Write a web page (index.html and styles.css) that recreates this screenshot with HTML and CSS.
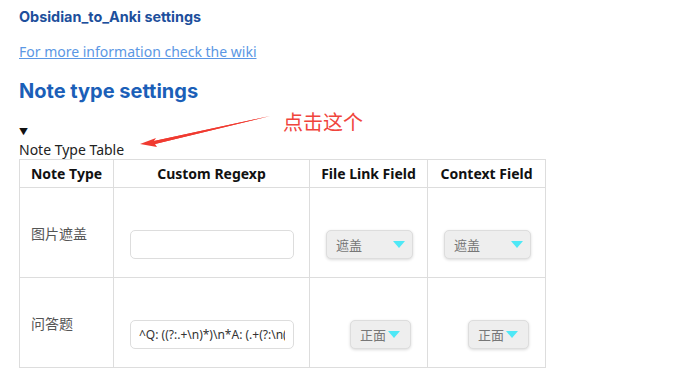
FILE: index.html
```html
<!DOCTYPE html>
<html lang="en">
<head>
    <meta charset="UTF-8">
    <meta name="viewport" content="width=device-width, initial-scale=1.0">
    <title>Obsidian_to_Anki settings</title>
    <link rel="stylesheet" href="styles.css">
</head>
<body>
    <h3 class="title">Obsidian_to_Anki settings</h3>
    <p class="wiki"><a href="#">For more information check the wiki</a></p>
    <h2 class="section">Note type settings</h2>

    <div class="toggle">&#9660;</div>
    <div class="caption">Note Type Table</div>

    <table class="types">
        <colgroup>
            <col class="c1">
            <col class="c2">
            <col class="c3">
            <col class="c4">
        </colgroup>
        <tr>
            <th>Note Type</th>
            <th>Custom Regexp</th>
            <th>File Link Field</th>
            <th>Context Field</th>
        </tr>
        <tr>
            <td class="name">图片遮盖</td>
            <td><div class="ctl"><input type="text" value=""></div></td>
            <td class="right"><div class="ctl"><span class="pick wide">遮盖<i></i></span></div></td>
            <td class="right"><div class="ctl"><span class="pick wide">遮盖<i></i></span></div></td>
        </tr>
        <tr>
            <td class="name">问答题</td>
            <td><div class="ctl"><input type="text" value="^Q: ((?:.+\n)*)\n*A: (.+(?:\n(?:^.{1,3}$|^.{4}(?<!<!--).*))*)"></div></td>
            <td class="right"><div class="ctl"><span class="pick">正面<i></i></span></div></td>
            <td class="right"><div class="ctl"><span class="pick">正面<i></i></span></div></td>
        </tr>
    </table>

    <!-- screenshot annotation -->
    <div class="note">
        <svg width="140" height="40" viewBox="0 0 140 40">
            <polygon points="130,3 14,28 16,25 0,31 17,34 15,31" fill="#f03a30"/>
            <polygon points="130,3 15,31 14,28" fill="#f03a30"/>
        </svg>
        <span>点击这个</span>
    </div>
</body>
</html>
```

FILE: styles.css
```css
body{
    margin: 0;
    padding: 0 19px;
    font-family: "Noto Sans", "Noto Sans CJK SC", sans-serif;
    color: #222;
    background: #fff;
    position: relative;
}

.title{
    margin: 0;
    padding-top: 7px;
    font-family: Inter, "Noto Sans CJK SC", sans-serif;
    font-size: 14.4px;
    line-height: 20px;
    font-weight: 700;
    color: #1d4f9c;
}

.wiki{
    margin: 14px 0 0;
    font-size: 14px;
    line-height: 22px;
}

.wiki a{
    color: #5b97e4;
}

.section{
    margin: 15px 0 0;
    font-family: Inter, "Noto Sans CJK SC", sans-serif;
    font-size: 20px;
    line-height: 26px;
    font-weight: 700;
    color: #1b5fb8;
}

.toggle{
    margin-top: 22px;
    font-size: 9px;
    line-height: 12px;
    color: #111;
}

.caption{
    font-size: 14px;
    line-height: 18px;
    margin-top: 3px;
}

.types{
    border-collapse: collapse;
    table-layout: fixed;
    width: 527px;
    font-size: 14px;
}

.c1{ width: 94px; }
.c2{ width: 196px; }
.c3{ width: 118px; }
.c4{ width: 118px; }

.types th, .types td{
    border: 1px solid #ddd;
}

.types th{
    height: 27px;
    padding: 0;
    font-weight: 700;
    color: #111;
    text-align: center;
    white-space: nowrap;
}

.types td{
    height: 89px;
    padding: 0 16px;
    vertical-align: middle;
}

.types td.name{
    padding-left: 11px;
    color: #555;
}

.types td.right{
    text-align: right;
}

.ctl{
    padding-top: 24px;
}

.ctl input{
    box-sizing: border-box;
    width: 164px;
    height: 29px;
    border: 1px solid #ddd;
    border-radius: 5px;
    padding: 0 8px;
    font-family: "Noto Sans", sans-serif;
    font-size: 12px;
    color: #333;
    outline: none;
}

.pick{
    box-sizing: border-box;
    display: inline-flex;
    align-items: center;
    height: 29px;
    padding: 0 10px 0 9px;
    gap: 2px;
    background: #eee;
    border: 1px solid #ddd;
    border-radius: 5px;
    box-shadow: 0 1px 3px rgba(0,0,0,0.15);
    font-size: 13px;
    color: #777;
    text-align: left;
}

.pick.wide{
    width: 87px;
    justify-content: space-between;
    padding-right: 7px;
}

.pick i{
    width: 0;
    height: 0;
    border-left: 6px solid transparent;
    border-right: 6px solid transparent;
    border-top: 7px solid #4ee8f6;
}

.note{
    position: absolute;
    left: 140px;
    top: 110px;
    display: flex;
    align-items: flex-start;
}

.note svg{
    margin-top: 3px;
}

.note span{
    margin-left: 3px;
    font-family: "Noto Sans CJK SC", sans-serif;
    font-size: 20px;
    line-height: 24px;
    color: #f0443c;
}
```
